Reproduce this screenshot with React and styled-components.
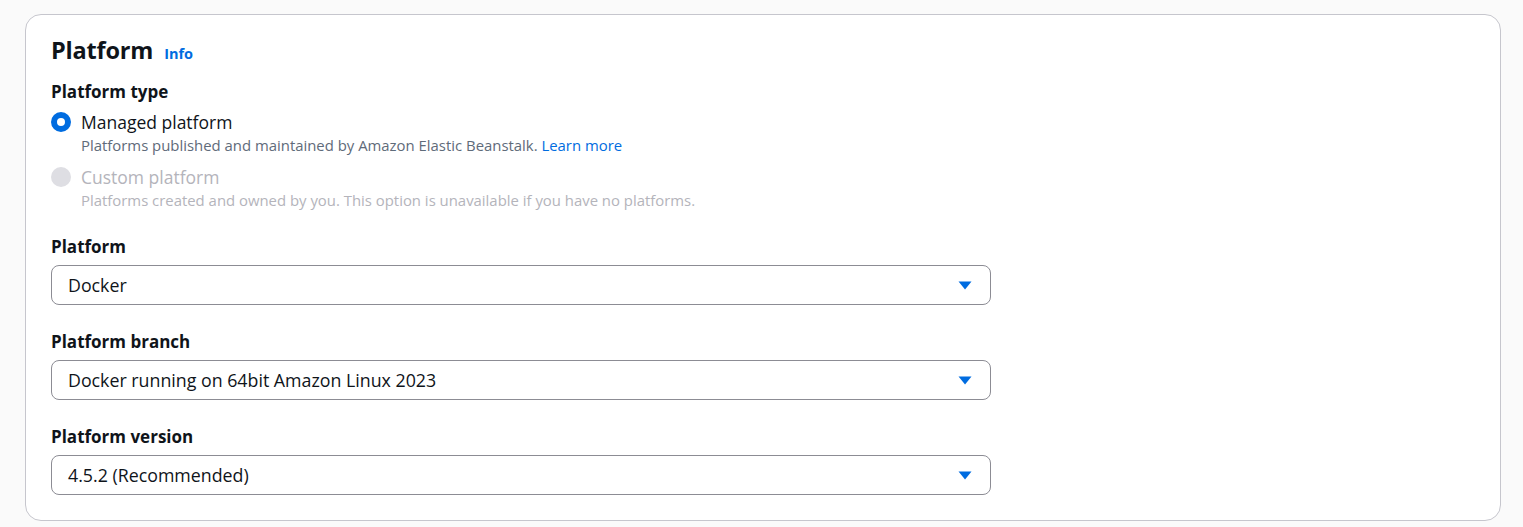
import styled, { createGlobalStyle } from 'styled-components';

const GlobalStyle = createGlobalStyle`
  body {
    margin: 0;
    background: #fafafa;
    font-family: "Open Sans", "Noto Sans", sans-serif;
    color: #0f141a;
  }
`;

const Page = styled.main`
  padding: 14px 22px 6px 25px;
`;

const Card = styled.section`
  background: #ffffff;
  border: 1px solid #c6c6cd;
  border-radius: 16px;
  padding: 20px 24px 25px 25px;
  display: flex;
  flex-flow: column;
`;

const Header = styled.header`
  display: flex;
  align-items: baseline;
  gap: 11px;
  margin-bottom: 16px;
`;

const Title = styled.h2`
  margin: 0;
  font-size: 23.5px;
  line-height: 30px;
  font-weight: 700;
  letter-spacing: -0.2px;
`;

const InfoLink = styled.a`
  color: #006ce0;
  font-size: 14.5px;
  font-weight: 700;
  text-decoration: none;
`;

const Field = styled.div`
  display: flex;
  flex-flow: column;
  margin-bottom: ${({ $gap }) => $gap ?? 26}px;

  &:last-child {
    margin-bottom: 0;
  }
`;

const Label = styled.div`
  font-size: 17px;
  font-weight: 700;
  line-height: 22px;
  margin-bottom: ${({ $space }) => $space ?? 7}px;
`;

const RadioGroup = styled.div`
  display: flex;
  flex-flow: column;
  gap: 10px;
`;

const RadioRow = styled.label`
  display: grid;
  grid-template-columns: 20px 1fr;
  column-gap: 10px;
  align-items: center;
  color: ${({ $disabled }) => ($disabled ? '#b4b4bb' : '#0f141a')};
`;

const RadioDot = styled.span`
  width: 20px;
  height: 20px;
  border-radius: 50%;
  box-sizing: border-box;
  background: ${({ $disabled }) => ($disabled ? '#dedee3' : '#ffffff')};
  border: ${({ $checked, $disabled }) =>
    $disabled ? 'none' : $checked ? '6px solid #006ce0' : '2px solid #8c8c94'};
`;

const RadioTitle = styled.span`
  font-size: 17.5px;
  line-height: 24px;
`;

const RadioDesc = styled.span`
  grid-column: 2;
  margin-top: 1px;
  font-size: 14.9px;
  line-height: 20px;
  color: ${({ $disabled }) => ($disabled ? '#b4b4bb' : '#5f6b7a')};
`;

const Link = styled.a`
  color: #006ce0;
  text-decoration: none;
`;

const Select = styled.div`
  width: 940px;
  height: 40px;
  box-sizing: border-box;
  border: 1px solid #8c8c94;
  border-radius: 8px;
  display: flex;
  align-items: center;
  justify-content: space-between;
  padding: 0 18px 0 16px;
  font-size: 17.8px;
  color: #0f141a;
`;

const Caret = () => (
  <svg width="14" height="9" viewBox="0 0 14 9">
    <path d="M0.5 0.5h13L7 8.5z" fill="#006ce0" />
  </svg>
);

const selects = [
  { label: 'Platform', value: 'Docker' },
  { label: 'Platform branch', value: 'Docker running on 64bit Amazon Linux 2023' },
  { label: 'Platform version', value: '4.5.2 (Recommended)' },
];

export default function App() {
  return (
    <>
      <GlobalStyle />
      <Page>
        <Card>
          <Header>
            <Title>Platform</Title>
            <InfoLink href="#">Info</InfoLink>
          </Header>

          <Field $gap={26}>
            <Label $space={7}>Platform type</Label>
            <RadioGroup>
              <RadioRow>
                <RadioDot $checked />
                <RadioTitle>Managed platform</RadioTitle>
                <RadioDesc>
                  Platforms published and maintained by Amazon Elastic Beanstalk.{' '}
                  <Link href="#">Learn more</Link>
                </RadioDesc>
              </RadioRow>
              <RadioRow $disabled>
                <RadioDot $disabled />
                <RadioTitle>Custom platform</RadioTitle>
                <RadioDesc $disabled>
                  Platforms created and owned by you. This option is unavailable if you have no platforms.
                </RadioDesc>
              </RadioRow>
            </RadioGroup>
          </Field>

          {selects.map((s) => (
            <Field key={s.label}>
              <Label>{s.label}</Label>
              <Select>
                <span>{s.value}</span>
                <Caret />
              </Select>
            </Field>
          ))}
        </Card>
      </Page>
    </>
  );
}
